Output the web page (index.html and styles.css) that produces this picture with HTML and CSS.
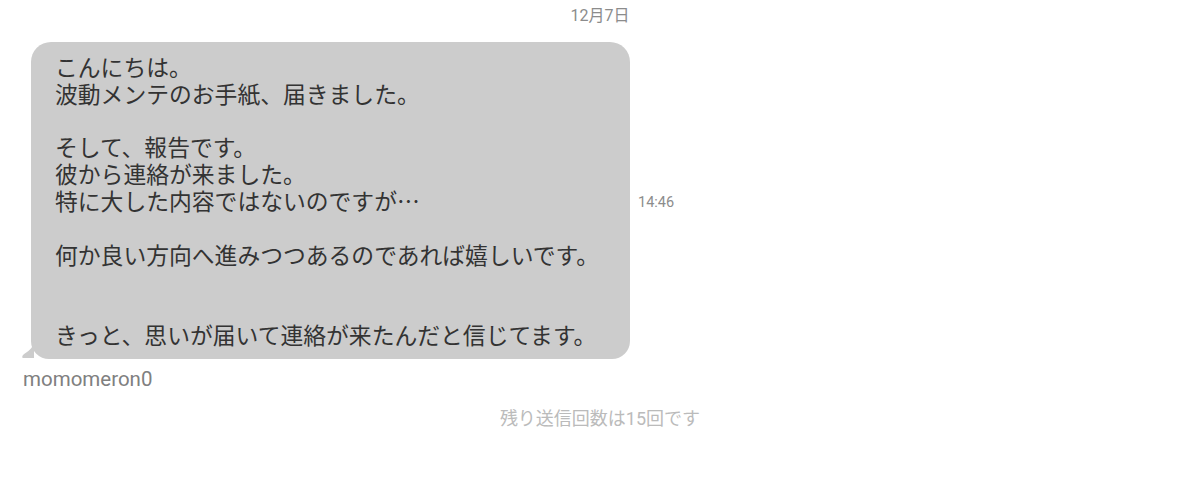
FILE: index.html
```html
<!DOCTYPE html>
<html lang="ja">
<head>
<meta charset="utf-8">
<link rel="stylesheet" href="styles.css">
</head>
<body>
<div class="chat">
  <div class="date">12月7日</div>
  <div class="row">
    <div class="bubble">
      <svg class="tail" width="12" height="18" viewBox="0 0 12 18"><path d="M12 0 C11 8 6 10 1 14 C0 15 0 17 1 17 L12 17 Z" fill="#cccccc"/></svg>
      <div class="text">
        <div class="line">こんにちは。</div>
        <div class="line">波動メンテのお手紙、届きました。</div>
        <div class="line"></div>
        <div class="line">そして、報告です。</div>
        <div class="line">彼から連絡が来ました。</div>
        <div class="line">特に大した内容ではないのですが…</div>
        <div class="line"></div>
        <div class="line">何か良い方向へ進みつつあるのであれば嬉しいです。</div>
        <div class="line"></div>
        <div class="line"></div>
        <div class="line">きっと、思いが届いて連絡が来たんだと信じてます。</div>
      </div>
    </div>
    <div class="time">14:46</div>
  </div>
  <div class="name">momomeron0</div>
  <div class="notice">残り送信回数は15回です</div>
</div>
</body>
</html>
```

FILE: styles.css
```css
html, body {
  margin: 0;
  padding: 0;
  background: #ffffff;
}
body {
  font-family: Roboto, "Noto Sans CJK JP", sans-serif;
  width: 1189px;
  height: 487px;
  overflow: hidden;
}
.chat {
  width: 1200px;
  display: flex;
  flex-direction: column;
}
.date {
  text-align: center;
  font-size: 16px;
  line-height: 20px;
  color: #8c8c8c;
  padding-top: 6px;
}
.row {
  display: flex;
  align-items: center;
  padding-left: 31px;
  margin-top: 16px;
}
.bubble {
  position: relative;
  width: 599px;
  background: #cccccc;
  border-radius: 20px 20px 18px 18px;
  box-sizing: border-box;
  padding: 12px 16px 10px 24px;
}
.tail {
  position: absolute;
  left: -9px;
  bottom: 0;
}
.text {
  font-family: "Noto Sans CJK JP", sans-serif;
  font-size: 22.8px;
  color: #333333;
}
.line {
  height: 26.8px;
  line-height: 26.8px;
  white-space: nowrap;
}
.time {
  margin-left: 8px;
  margin-top: 4px;
  font-size: 14.5px;
  color: #8c8c8c;
}
.name {
  padding-left: 23px;
  margin-top: 8px;
  font-size: 20.5px;
  line-height: 24px;
  color: #808080;
}
.notice {
  text-align: center;
  margin-top: 16px;
  font-size: 18px;
  line-height: 24px;
  color: #bbbbbb;
}
```
